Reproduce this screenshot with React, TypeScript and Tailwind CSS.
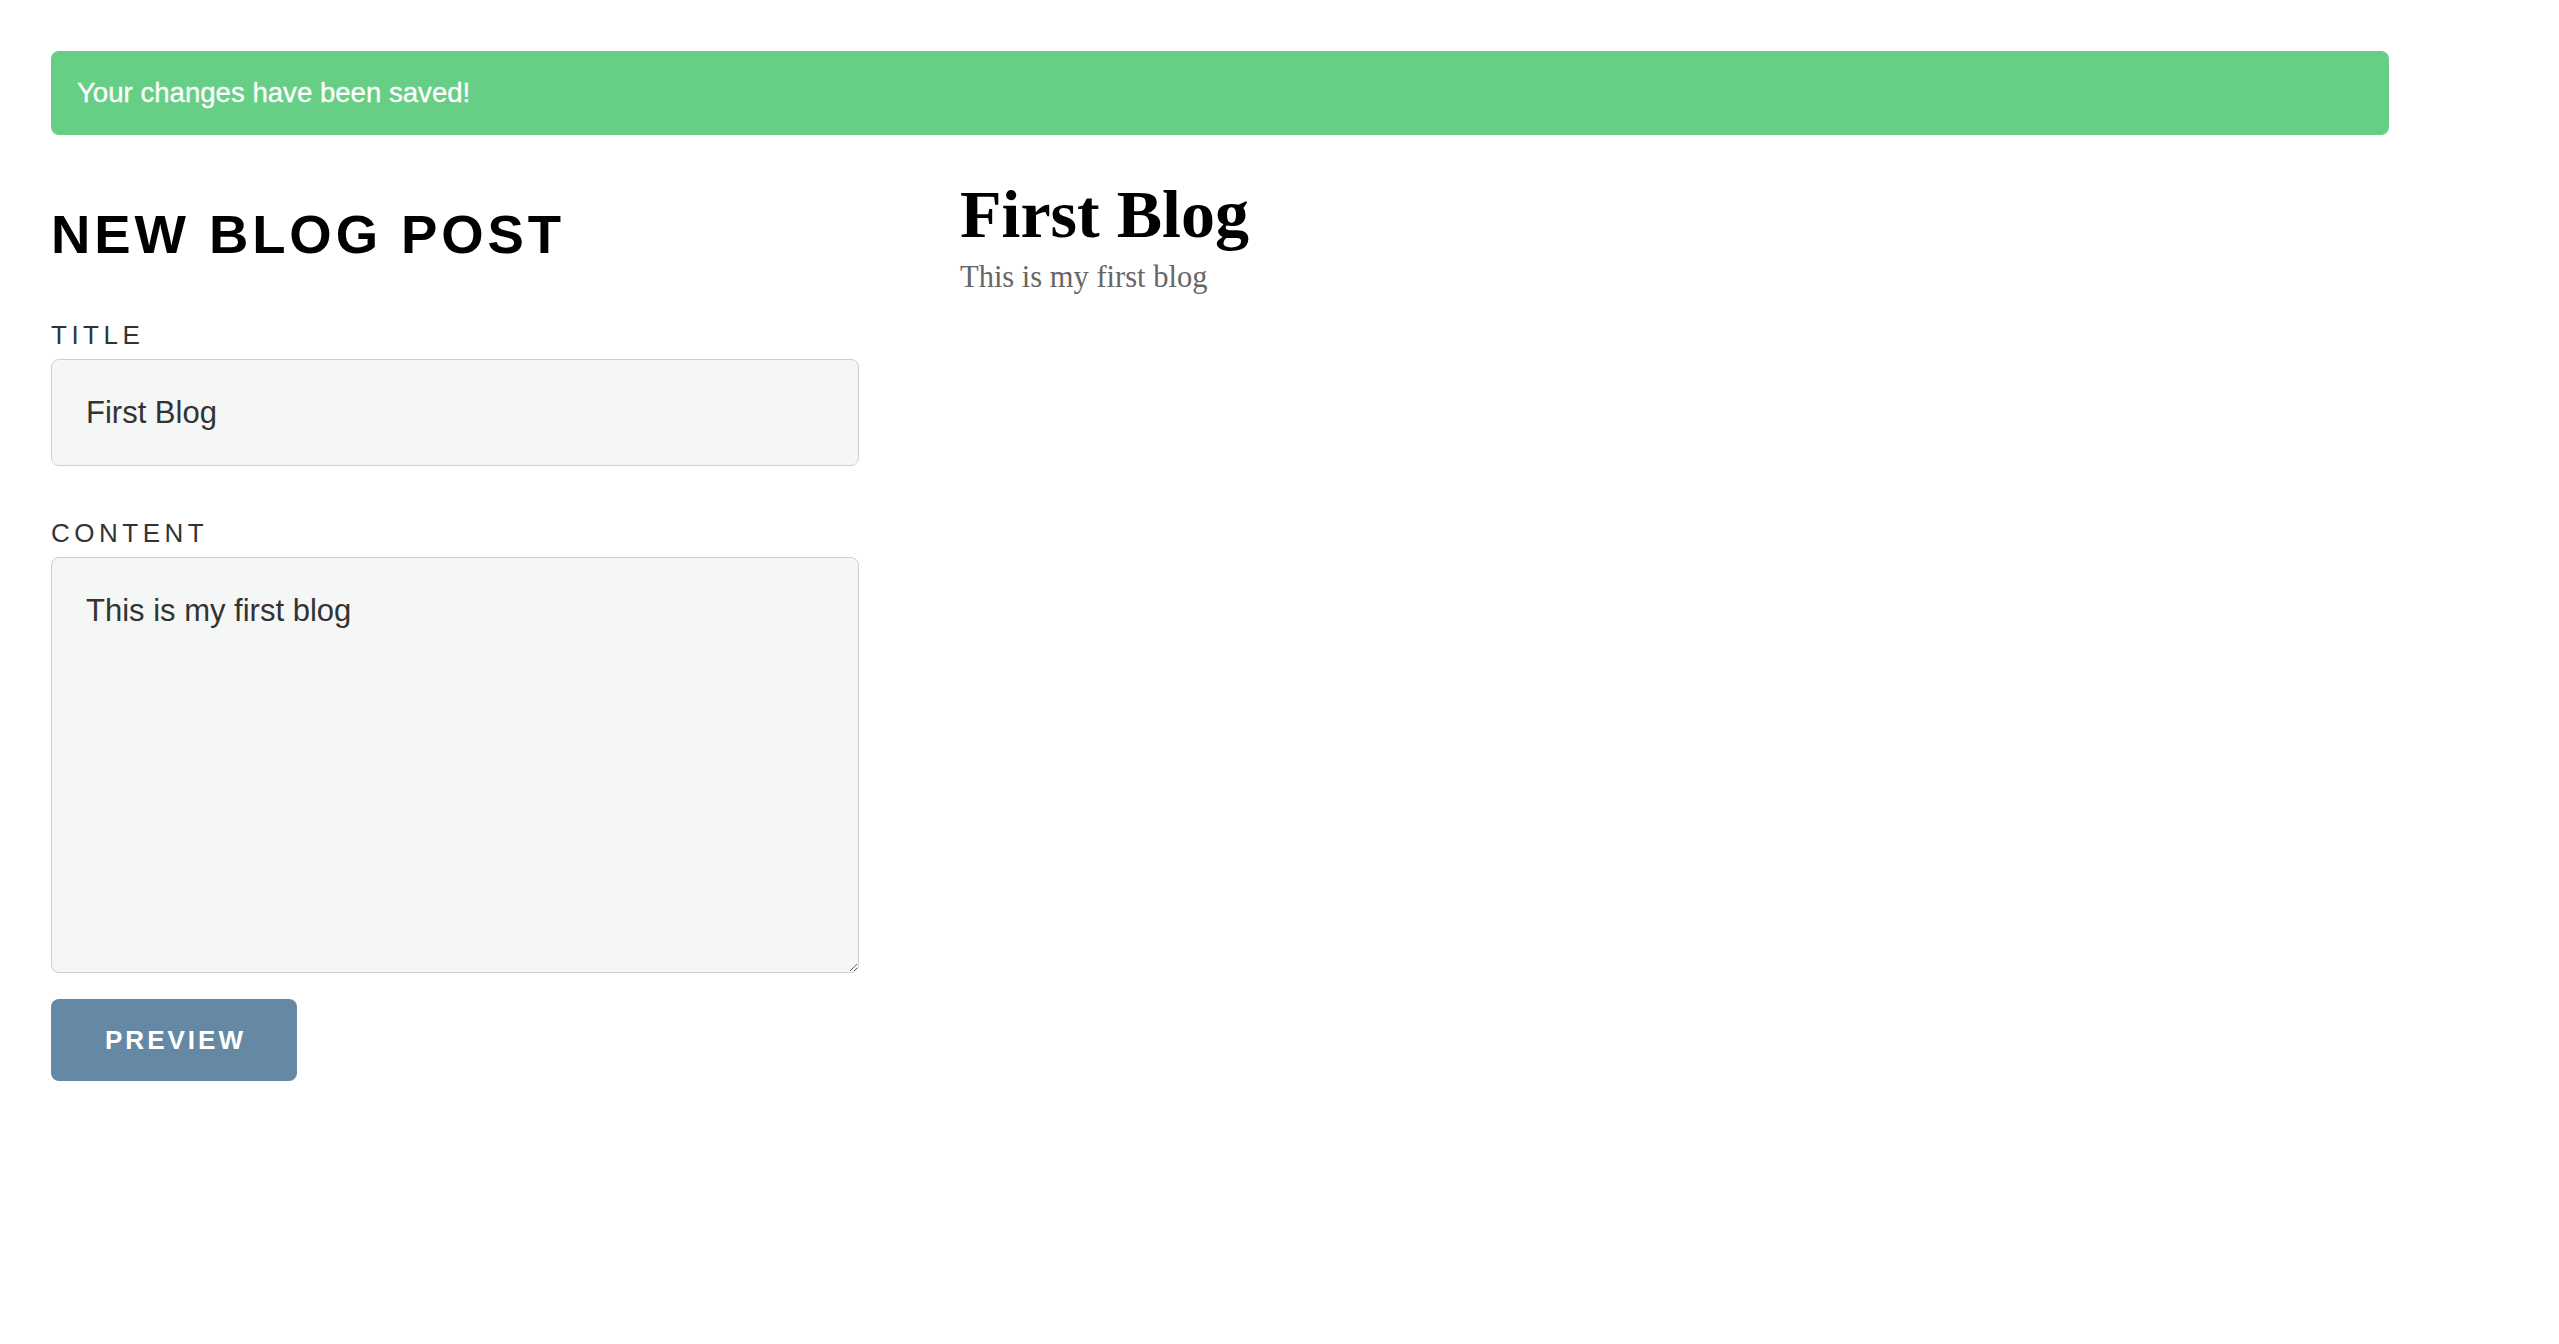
import React from "react";

export default function App() {
  return (
    <div className="min-h-screen w-full bg-white">
      <div className="ml-[51px] w-[2338px] pt-[51px] font-['Liberation_Sans',Arial,sans-serif]">
        <div className="flex h-[84px] items-center rounded-[8px] bg-[#66cf85] pl-[26px] text-[27.6px] leading-none text-white [-webkit-text-stroke:0.3px_white]">
          Your changes have been saved!
        </div>

        <div className="mt-[45px] flex gap-[101px]">
          <div className="w-[808px] shrink-0 pt-[25px]">
            <h1 className="h-[60px] text-[54.5px] font-bold leading-[60px] tracking-[3.9px] text-black">
              NEW BLOG POST
            </h1>

            <label className="mt-[55px] block h-[30px] text-[26px] leading-[30px] tracking-[4.5px] text-[#333]">
              TITLE
            </label>
            <input
              type="text"
              defaultValue="First Blog"
              className="mt-[9px] block h-[107px] w-[808px] rounded-[8px] border border-[#cfcfcf] bg-[#f5f7f6] pl-[34px] text-[31px] text-[#333] outline-none font-['Liberation_Sans',Arial,sans-serif]"
            />

            <label className="mt-[52px] block h-[30px] text-[26px] leading-[30px] tracking-[4.5px] text-[#333]">
              CONTENT
            </label>
            <textarea
              defaultValue="This is my first blog"
              className="mt-[9px] block h-[416px] w-[808px] rounded-[8px] border border-[#cfcfcf] bg-[#f5f7f6] pl-[34px] pt-[35px] text-[31px] leading-[36px] text-[#333] outline-none font-['Liberation_Sans',Arial,sans-serif]"
            />

            <button
              type="button"
              className="mt-[26px] flex h-[82px] w-[246px] items-center justify-center rounded-[8px] bg-[#6589a5] pl-[3px] text-[26px] font-semibold leading-none tracking-[3px] text-white font-['Liberation_Sans',Arial,sans-serif]"
            >
              PREVIEW
            </button>
          </div>

          <div className="font-['Liberation_Serif','Times_New_Roman',serif]">
            <h2 className="h-[68px] text-[68px] font-bold leading-[68px] text-black">First Blog</h2>
            <p className="mt-[12px] text-[30.5px] leading-[34px] text-[#666]">This is my first blog</p>
          </div>
        </div>
      </div>
    </div>
  );
}
